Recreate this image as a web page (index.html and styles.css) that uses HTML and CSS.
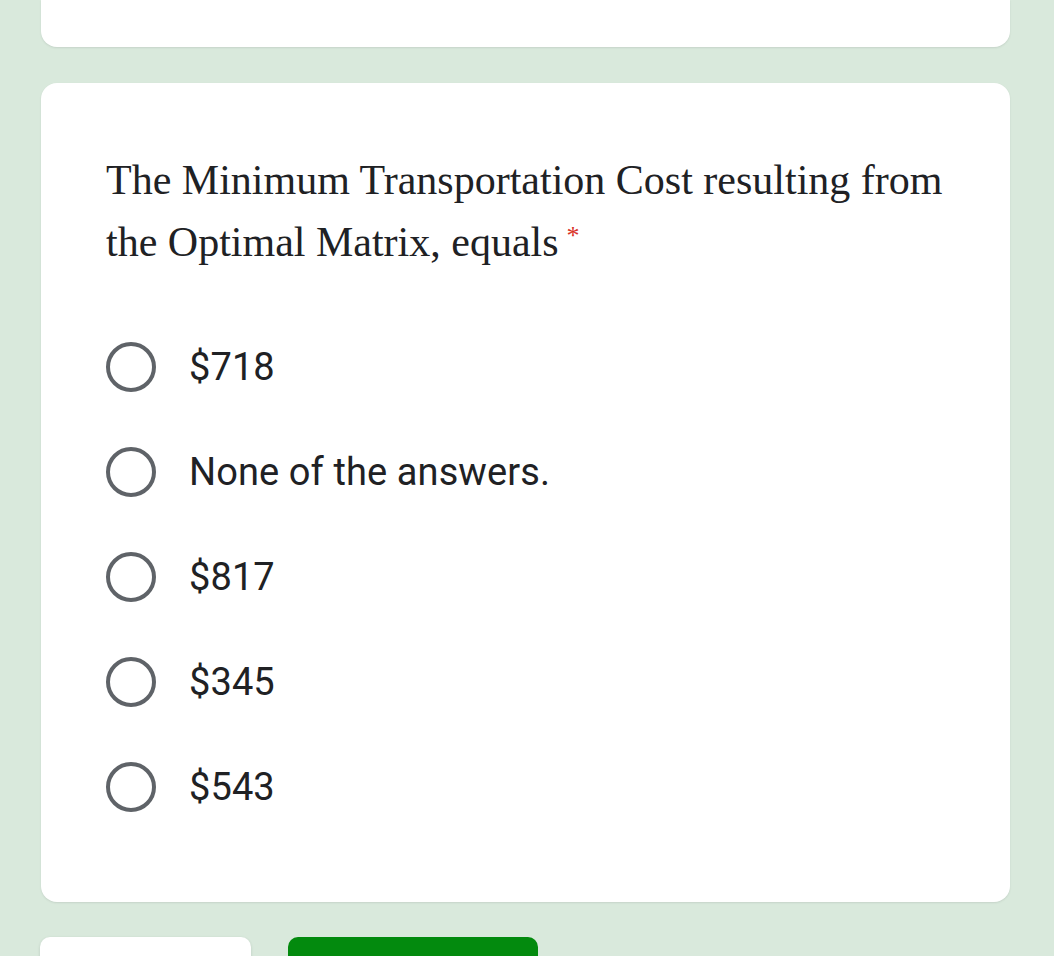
FILE: index.html
```html
<!DOCTYPE html>
<html lang="en">
<head>
<meta charset="utf-8">
<title>Question</title>
<link rel="stylesheet" href="styles.css">
</head>
<body>
<div class="page">
  <div class="card card-top"></div>
  <div class="card card-question">
    <div class="title">The Minimum Transportation Cost resulting from the Optimal Matrix, equals<span class="req">*</span></div>
    <div class="options">
      <label class="option"><span class="radio"></span><span class="opt-text">$718</span></label>
      <label class="option"><span class="radio"></span><span class="opt-text">None of the answers.</span></label>
      <label class="option"><span class="radio"></span><span class="opt-text">$817</span></label>
      <label class="option"><span class="radio"></span><span class="opt-text">$345</span></label>
      <label class="option"><span class="radio"></span><span class="opt-text">$543</span></label>
    </div>
  </div>
  <div class="buttons">
    <div class="btn btn-back"></div>
    <div class="btn btn-next"></div>
  </div>
</div>
</body>
</html>
```
FILE: styles.css
```css
html, body {
  margin: 0;
  padding: 0;
  height: 100%;
}
body {
  background: #d9e9dc;
  overflow: hidden;
  font-family: Roboto, "Liberation Sans", sans-serif;
  color: #202124;
}
.page {
  width: 969px;
  margin-left: 41px;
  display: flex;
  flex-direction: column;
}
.card {
  background: #ffffff;
  border-radius: 16px;
  box-shadow: 0 1px 2px rgba(60, 64, 67, 0.12);
}
.card-top {
  height: 47px;
  border-radius: 0 0 16px 16px;
}
.card-question {
  margin-top: 36px;
  height: 819px;
  box-sizing: border-box;
  padding: 66px 65px 0 65px;
}
.title {
  font-family: "Liberation Serif", serif;
  font-size: 42px;
  line-height: 62px;
  height: 124px;
  color: #202124;
}
.req {
  color: #d93025;
  font-family: "Liberation Serif", serif;
  font-size: 26px;
  line-height: 0;
  position: relative;
  top: -12px;
  margin-left: 8px;
}
.options {
  margin-top: 41px;
  display: flex;
  flex-direction: column;
}
.option {
  height: 105px;
  display: flex;
  align-items: center;
}
.radio {
  width: 50px;
  height: 50px;
  box-sizing: border-box;
  border: 4px solid #5f6368;
  border-radius: 50%;
  flex: none;
}
.opt-text {
  margin-left: 33px;
  font-size: 38px;
  letter-spacing: 0.1px;
  color: #202124;
}
.buttons {
  margin-top: 35px;
  margin-left: -1px;
  display: flex;
  gap: 37px;
}
.btn {
  height: 60px;
  border-radius: 10px;
}
.btn-back {
  width: 211px;
  background: #ffffff;
  box-shadow: 0 1px 3px rgba(60, 64, 67, 0.18);
}
.btn-next {
  width: 250px;
  background: #038a0e;
}
```
